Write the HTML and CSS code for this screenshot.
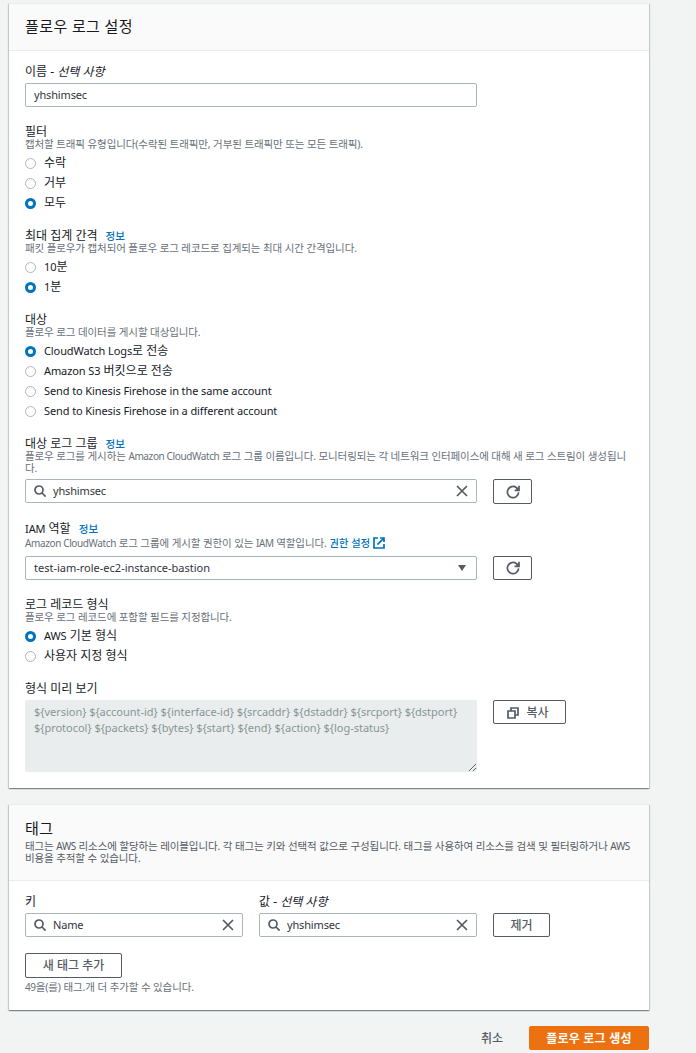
FILE: index.html
```html
<!DOCTYPE html>
<html lang="ko">
  <head>
    <meta charset="UTF-8" />
    <meta name="viewport" content="width=device-width, initial-scale=1.0" />
    <title>플로우 로그 생성</title>
    <link rel="stylesheet" href="styles.css">
  </head>
  <body>
    <svg class="sprite" aria-hidden="true">
      <symbol id="i-search" viewBox="0 0 12 12"><circle cx="5" cy="5" r="4" /><path d="M8 8l3.6 3.6" /></symbol>
      <symbol id="i-close" viewBox="0 0 12 12"><path d="M1 1l10 10M11 1L1 11" /></symbol>
      <symbol id="i-refresh" viewBox="0 0 14 14"><path d="M12.6 7.4A5.6 5.6 0 1 1 10.4 2.6l1.8 1.6" /><path d="M13 .8v4.5H8.6M12.6 4.8L10.4 3" /></symbol>
      <symbol id="i-external" viewBox="0 0 12 12"><path d="M5 1H1v10h10V7M7 1h4v4M11 1L4.4 7.6" /></symbol>
      <symbol id="i-copy" viewBox="0 0 12 12"><path d="M1 4h7v7H1zM4 4V1h7v7H8" /></symbol>
    </svg>

    <div class="container">
      <section class="card">
        <div class="card-header">
          <h2>플로우 로그 설정</h2>
        </div>
        <div class="card-body">
          <div class="field">
            <label class="label" for="name">이름 - <i>선택 사항</i></label>
            <input class="input" type="text" id="name" value="yhshimsec" />
          </div>

          <div class="field">
            <div class="label">필터</div>
            <div class="desc">캡처할 트래픽 유형입니다(수락된 트래픽만, 거부된 트래픽만 또는 모든 트래픽).</div>
            <div class="radios">
              <label><input type="radio" name="filter" />수락</label>
              <label><input type="radio" name="filter" />거부</label>
              <label><input type="radio" name="filter" checked />모두</label>
            </div>
          </div>

          <div class="field">
            <div class="label">최대 집계 간격 <a class="info">정보</a></div>
            <div class="desc">패킷 플로우가 캡처되어 플로우 로그 레코드로 집계되는 최대 시간 간격입니다.</div>
            <div class="radios">
              <label><input type="radio" name="interval" /><span><span class="en">10</span>분</span></label>
              <label><input type="radio" name="interval" checked /><span><span class="en">1</span>분</span></label>
            </div>
          </div>

          <div class="field">
            <div class="label">대상</div>
            <div class="desc">플로우 로그 데이터를 게시할 대상입니다.</div>
            <div class="radios">
              <label><input type="radio" name="dest" checked /><span><span class="en">CloudWatch Logs</span>로 전송</span></label>
              <label><input type="radio" name="dest" /><span><span class="en">Amazon S3</span> 버킷으로 전송</span></label>
              <label><input type="radio" name="dest" /><span class="en">Send to Kinesis Firehose in the same account</span></label>
              <label><input type="radio" name="dest" /><span class="en">Send to Kinesis Firehose in a different account</span></label>
            </div>
          </div>

          <div class="field">
            <div class="label">대상 로그 그룹 <a class="info">정보</a></div>
            <div class="desc two-line">플로우 로그를 게시하는 <span class="en-s">Amazon CloudWatch</span> 로그 그룹 이름입니다. 모니터링되는 각 네트워크 인터페이스에 대해 새 로그 스트림이 생성됩니<br>다.</div>
            <div class="row">
              <div class="search">
                <svg class="icon"><use href="#i-search" /></svg>
                <input type="text" value="yhshimsec" />
                <svg class="icon"><use href="#i-close" /></svg>
              </div>
              <button class="btn refresh"><svg class="icon"><use href="#i-refresh" /></svg></button>
            </div>
          </div>

          <div class="field">
            <div class="label"><span class="en">IAM</span> 역할 <a class="info">정보</a></div>
            <div class="desc with-link"><span class="en-s">Amazon CloudWatch</span> 로그 그룹에 게시할 권한이 있는 <span class="en-s">IAM</span> 역할입니다. <a>권한 설정</a><svg class="icon external"><use href="#i-external" /></svg></div>
            <div class="row">
              <div class="input select">test-iam-role-ec2-instance-bastion</div>
              <button class="btn refresh short"><svg class="icon"><use href="#i-refresh" /></svg></button>
            </div>
          </div>

          <div class="field">
            <div class="label">로그 레코드 형식</div>
            <div class="desc">플로우 로그 레코드에 포함할 필드를 지정합니다.</div>
            <div class="radios">
              <label><input type="radio" name="format" checked /><span><span class="en">AWS</span> 기본 형식</span></label>
              <label><input type="radio" name="format" />사용자 지정 형식</label>
            </div>
          </div>

          <div class="field">
            <div class="label">형식 미리 보기</div>
            <div class="row">
              <textarea disabled>${version} ${account-id} ${interface-id} ${srcaddr} ${dstaddr} ${srcport} ${dstport}
${protocol} ${packets} ${bytes} ${start} ${end} ${action} ${log-status}</textarea>
              <button class="btn copy"><svg class="icon"><use href="#i-copy" /></svg>복사</button>
            </div>
          </div>
        </div>
      </section>

      <section class="card">
        <div class="card-header tags-header">
          <h2>태그</h2>
          <div class="desc">태그는 <span class="en-s">AWS</span> 리소스에 할당하는 레이블입니다. 각 태그는 키와 선택적 값으로 구성됩니다. 태그를 사용하여 리소스를 검색 및 필터링하거나 <span class="en-s">AWS</span><br>비용을 추적할 수 있습니다.</div>
        </div>
        <div class="card-body">
          <div class="tags">
            <div class="label">키</div>
            <div class="label">값 - <i>선택 사항</i></div>
            <div></div>
            <div class="search">
              <svg class="icon"><use href="#i-search" /></svg>
              <input type="text" value="Name" />
              <svg class="icon"><use href="#i-close" /></svg>
            </div>
            <div class="search">
              <svg class="icon"><use href="#i-search" /></svg>
              <input type="text" value="yhshimsec" />
              <svg class="icon"><use href="#i-close" /></svg>
            </div>
            <button class="btn">제거</button>
          </div>
          <button class="btn add">새 태그 추가</button>
          <div class="desc hint"><span class="en-s">49</span>을(를) 태그.개 더 추가할 수 있습니다.</div>
        </div>
      </section>

      <div class="actions">
        <button class="btn link">취소</button>
        <button class="btn primary">플로우 로그 생성</button>
      </div>
    </div>
  </body>
</html>
```
FILE: styles.css
```css
* {
  box-sizing: border-box;
}
body {
  margin: 0;
  background-color: #f2f3f3;
  color: #16191f;
  font-family: "Noto Sans", "Noto Sans CJK KR", sans-serif;
  font-size: 12px;
  line-height: 12px;
}
input,
button,
textarea {
  font-family: inherit;
  margin: 0;
}
.sprite {
  display: none;
}
.icon {
  width: 12px;
  height: 12px;
  flex: none;
  fill: none;
  stroke: #545b64;
  stroke-width: 1.7;
}
.container {
  width: 640px;
  margin-left: 9px;
  padding-top: 3px;
}
.card {
  margin-bottom: 16px;
  background-color: #fff;
  border-top: 1px solid #eaeded;
  box-shadow: 0 1px 1px 0 rgba(0, 28, 36, 0.3),
    1px 1px 1px 0 rgba(0, 28, 36, 0.15), -1px 1px 1px 0 rgba(0, 28, 36, 0.15);
}
.card-header {
  height: 47px;
  padding: 12px 16px 0;
  background-color: #fafafa;
  border-bottom: 1px solid #eaeded;
}
.card-header h2 {
  margin: 0;
  font-size: 15px;
  font-weight: 400;
  line-height: 20px;
  letter-spacing: 0.4px;
}
.card-body {
  padding: 14px 16px 16px;
}
.field {
  margin-bottom: 18px;
}
.field:last-child {
  margin-bottom: 0;
}
.label {
  display: block;
  height: 13px;
  margin-bottom: 5px;
  padding-top: 1px;
  white-space: nowrap;
}
.label:has(+ .desc) {
  margin-bottom: 0;
}
.info {
  margin-left: 5px;
  font-size: 10.5px;
  font-weight: 500;
  color: #0073bb;
}
.en {
  font-size: 11px;
  letter-spacing: -0.1px;
}
.en-s {
  font-size: 10px;
  letter-spacing: -0.38px;
}
/* keeps the smaller latin text from stretching the line box */
.en-s,
.info,
.label .en {
  line-height: 0;
}
.desc {
  font-size: 10.5px;
  letter-spacing: -0.11px;
  color: #687078;
  white-space: nowrap;
}
.two-line {
  margin-bottom: 5px;
}
.with-link {
  display: flex;
  align-items: center;
  height: 15px;
  margin-bottom: 6px;
  white-space: pre;
}
.desc a {
  font-weight: 500;
  color: #0073bb;
}
.external {
  margin-left: 3px;
  stroke: #0073bb;
}
.radios {
  margin: 3px 0 -2px;
}
.radios label {
  display: flex;
  align-items: center;
  height: 20px;
}
.radios input {
  appearance: none;
  width: 11px;
  height: 11px;
  margin-right: 8px;
  border: 1px solid #aab7b8;
  border-radius: 50%;
}
.radios input:checked {
  border: 3.5px solid #0073bb;
}
.row {
  display: flex;
  align-items: flex-start;
  gap: 16px;
}
.input,
.search {
  width: 452px;
  height: 24px;
  padding: 0 8px;
  background-color: #fff;
  border: 1px solid #aab7b8;
  border-radius: 2px;
  color: #30343b;
  font-size: 11px;
}
.input {
  display: block;
}
#name {
  padding-bottom: 2px;
  letter-spacing: -0.15px;
}
.search {
  display: flex;
  align-items: center;
}
.search input {
  flex: 1;
  min-width: 0;
  padding: 0 0 1px 7px;
  border: none;
  outline: none;
  background: none;
  color: #30343b;
  font-size: 11px;
  letter-spacing: -0.15px;
}
.select {
  display: flex;
  align-items: center;
  justify-content: space-between;
}
.select::after {
  content: "";
  margin-right: 2px;
  border: 4.5px solid transparent;
  border-top: 6px solid #545b64;
  border-bottom: none;
}
.btn {
  display: flex;
  align-items: center;
  justify-content: center;
  height: 24px;
  padding: 1px 0 0;
  background-color: #fff;
  border: 1px solid #545b64;
  border-radius: 2px;
  color: #545b64;
  font-size: 12px;
  font-weight: 500;
  line-height: 12px;
  white-space: nowrap;
  cursor: pointer;
}
.refresh {
  width: 39px;
  height: 25px;
  padding: 0;
}
.refresh .icon {
  width: 14px;
  height: 14px;
}
.short {
  height: 24px;
}
.copy {
  width: 73px;
  gap: 7px;
  padding-right: 3px;
}
textarea {
  width: 452px;
  height: 72px;
  padding: 4px 9px;
  background-color: #eaeded;
  border: none;
  border-radius: 2px;
  color: #879596;
  font-size: 11px;
  line-height: 16px;
  letter-spacing: -0.02px;
  white-space: pre;
  overflow: hidden;
  resize: vertical;
}
.tags-header {
  height: 76px;
  padding-top: 13px;
}
.tags-header .desc {
  margin-top: 2px;
  color: #545b64;
}
.tags {
  display: grid;
  grid-template-columns: 218px 218px 57px;
  column-gap: 16px;
  margin-bottom: 16px;
}
.tags .search {
  width: 218px;
}
.add {
  width: 97px;
  height: 25px;
  padding-top: 0;
}
.hint {
  margin: 3px 0 1px;
}
.actions {
  display: flex;
  justify-content: flex-end;
  gap: 16px;
}
.link {
  width: 42px;
  background: none;
  border-color: transparent;
}
.primary {
  width: 120px;
  background-color: #ec7211;
  border-color: #ec7211;
  color: #fff;
  font-weight: 700;
  letter-spacing: 0.2px;
}
```
